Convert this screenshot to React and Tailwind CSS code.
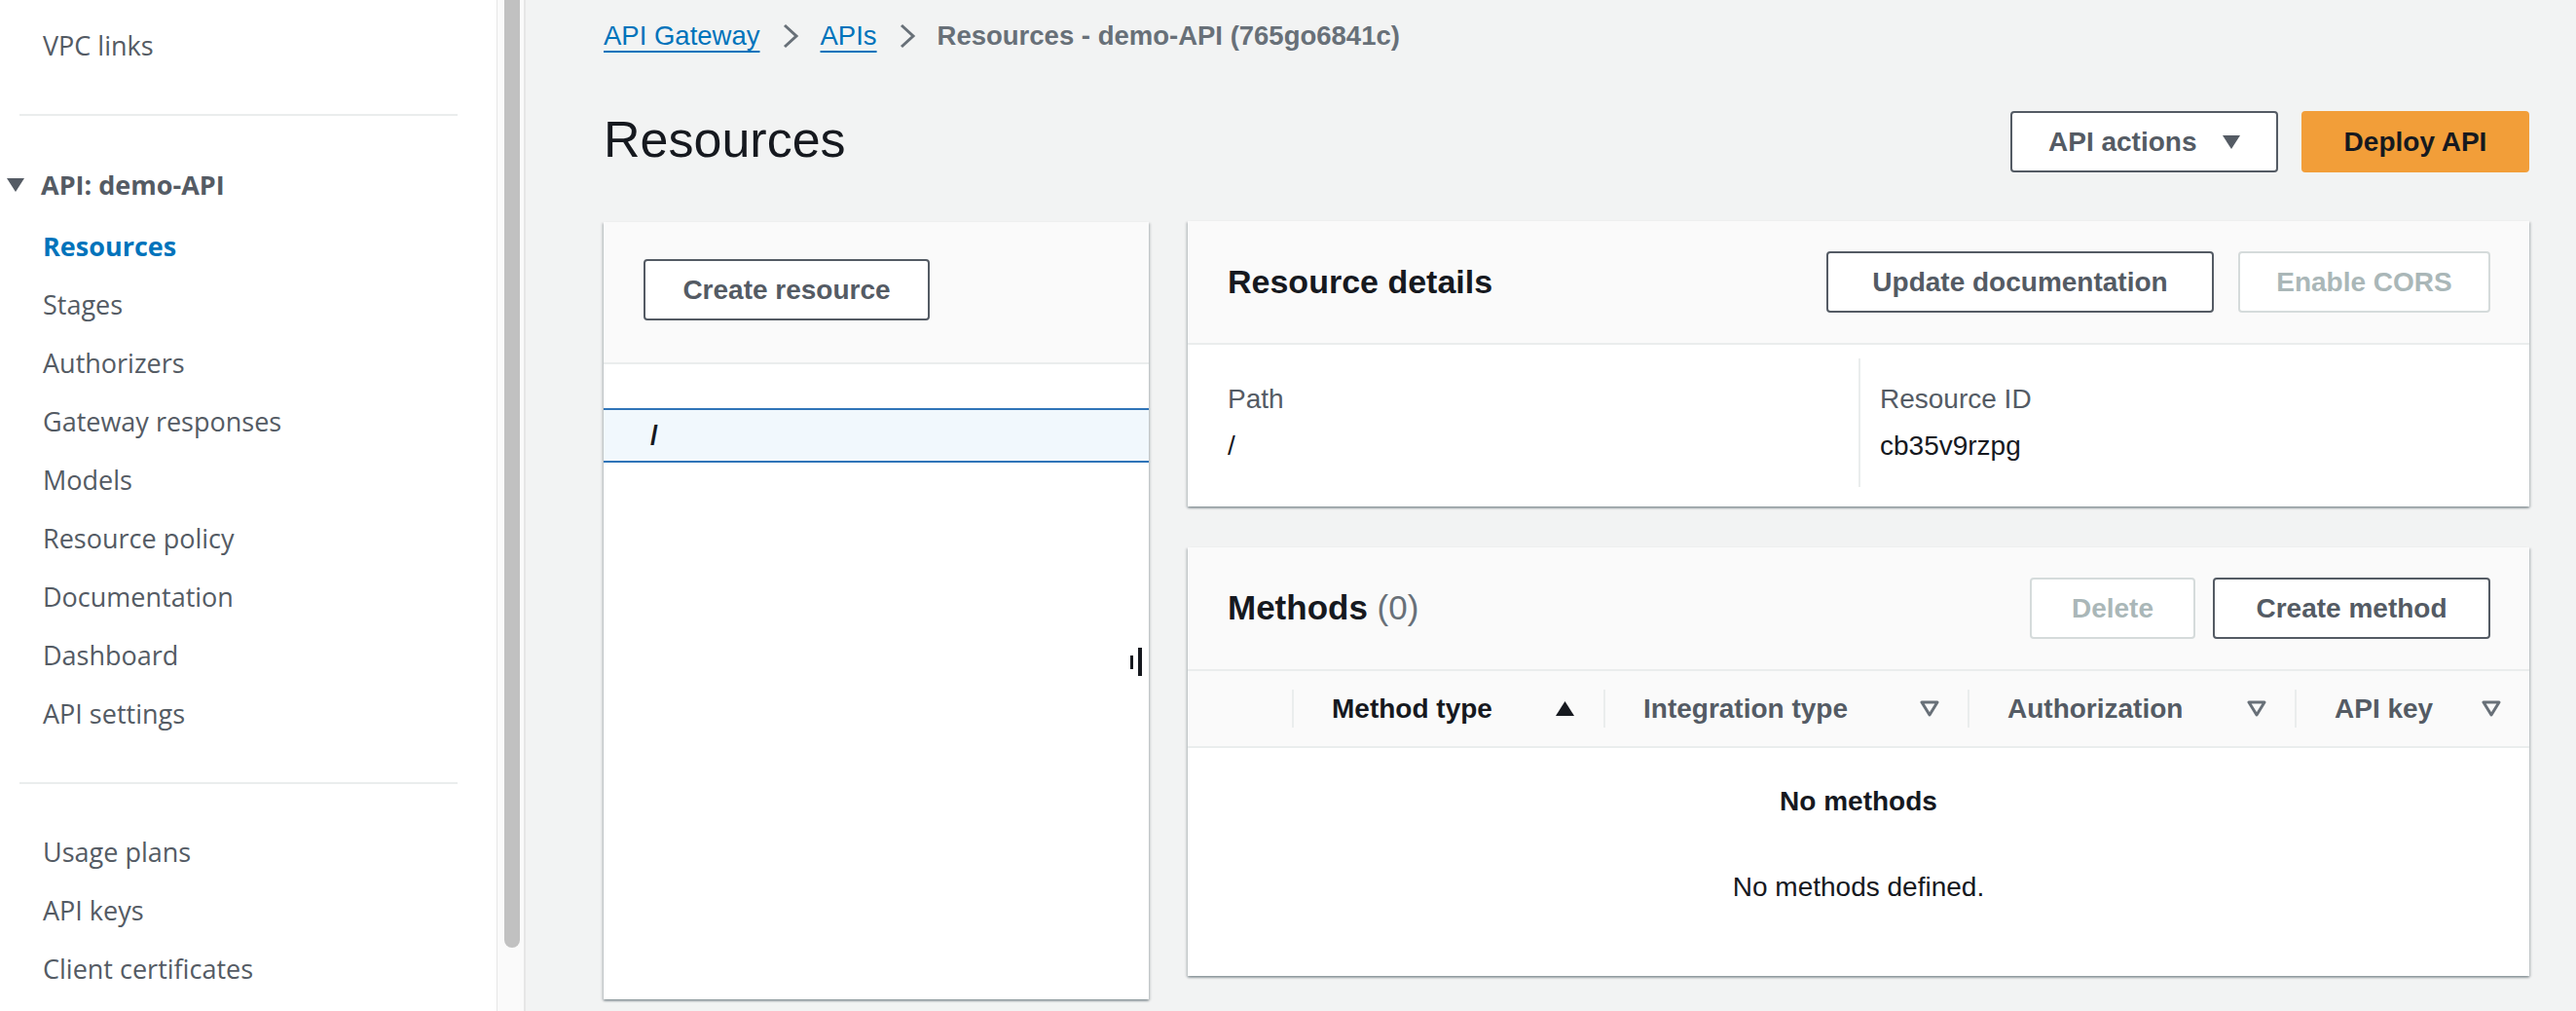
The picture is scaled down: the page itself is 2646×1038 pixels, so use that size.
import React from "react";

const apiNav = [
  "Resources",
  "Stages",
  "Authorizers",
  "Gateway responses",
  "Models",
  "Resource policy",
  "Documentation",
  "Dashboard",
  "API settings",
];

function Chevron() {
  return (
    <svg width="18" height="28" viewBox="0 0 18 28" className="shrink-0">
      <polyline points="3,3 15,14 3,25" fill="none" stroke="#687078" strokeWidth="3" />
    </svg>
  );
}

function SortUp() {
  return (
    <svg width="21" height="17" viewBox="0 0 21 17">
      <polygon points="10.5,1 20,16 1,16" fill="#16191f" />
    </svg>
  );
}

function SortDown() {
  return (
    <svg width="20" height="17" viewBox="0 0 20 17">
      <polygon points="2,2 18,2 10,15" fill="none" stroke="#687078" strokeWidth="3" strokeLinejoin="round" />
    </svg>
  );
}

function Button({ children, disabled, w }) {
  return (
    <button
      className={
        disabled
          ? `${w} h-[63px] flex items-center justify-center whitespace-nowrap border-2 border-[#d5dbdb] rounded-[4px] bg-white text-[#aab7b8] font-bold text-[28px] leading-none`
          : `${w} h-[63px] flex items-center justify-center whitespace-nowrap border-2 border-[#545b64] rounded-[4px] bg-white text-[#545b64] font-bold text-[28px] leading-none`
      }
    >
      {children}
    </button>
  );
}

const card =
  "bg-white shadow-[0_2px_2px_0_rgba(0,28,36,0.3),2px_1px_2px_0_rgba(0,28,36,0.12),-2px_1px_2px_0_rgba(0,28,36,0.12)]";

export default function App() {
  return (
    <div className="flex h-[1038px] w-full overflow-hidden bg-[#f2f3f3] font-['Liberation_Sans',Arial,sans-serif]">
      {/* ---------- Sidebar ---------- */}
      <aside className="w-[510px] shrink-0 bg-white pt-[17px] font-['Open_Sans',sans-serif] text-[27px] text-[#545b64]">
        <div className="h-[60px] flex items-center pl-[44px]">VPC links</div>
        <div className="mt-[40px] ml-[20px] w-[450px] h-[2px] bg-[#eaeded]" />
        <div className="mt-[41px] h-[60px] flex items-center pl-[6px] font-bold">
          <svg width="20" height="16" viewBox="0 0 20 16" className="mr-[16px]">
            <polygon points="1,1 19,1 10,15" fill="#545b64" />
          </svg>
          API: demo-API
        </div>
        <div className="mt-[3px]">
          {apiNav.map((item) => (
            <div
              key={item}
              className={
                item === "Resources"
                  ? "h-[60px] flex items-center pl-[44px] font-bold text-[#0073bb]"
                  : "h-[60px] flex items-center pl-[44px]"
              }
            >
              {item}
            </div>
          ))}
        </div>
        <div className="mt-[40px] ml-[20px] w-[450px] h-[2px] bg-[#eaeded]" />
        <div className="mt-[40px]">
          {["Usage plans", "API keys", "Client certificates"].map((item) => (
            <div key={item} className="h-[60px] flex items-center pl-[44px]">
              {item}
            </div>
          ))}
        </div>
      </aside>

      {/* scrollbar */}
      <div className="w-[30px] shrink-0 bg-[#fafafa] border-l border-r-2 border-[#e6e6e6] pl-[7px]">
        <div className="w-[16px] h-[973px] rounded-b-full bg-[#c1c1c1]" />
      </div>

      {/* ---------- Main ---------- */}
      <main className="flex-1 min-w-0 pl-[80px] pr-[48px] pt-[18px]">
        <nav className="h-[38px] flex items-center gap-[22px] text-[27.5px] whitespace-nowrap">
          <a className="text-[#0073bb] underline decoration-2 underline-offset-[6px]">API Gateway</a>
          <Chevron />
          <a className="text-[#0073bb] underline decoration-2 underline-offset-[6px]">APIs</a>
          <Chevron />
          <span className="font-bold text-[#687078]">Resources - demo-API (765go6841c)</span>
        </nav>

        <div className="mt-[58px] h-[63px] flex items-center justify-between">
          <h1 className="text-[52px] leading-none text-[#16191f] mb-[6px]">Resources</h1>
          <div className="flex gap-[24px]">
            <button className="w-[275px] h-[63px] pl-[37px] pr-[36px] whitespace-nowrap border-2 border-[#545b64] rounded-[4px] bg-white text-[#545b64] font-bold text-[28px] flex items-center justify-between">
              API actions
              <svg width="20" height="16" viewBox="0 0 20 16">
                <polygon points="1,1 19,1 10,15" fill="#545b64" />
              </svg>
            </button>
            <button className="w-[234px] h-[63px] whitespace-nowrap rounded-[4px] bg-[#f29e39] text-[#16191f] font-bold text-[28px]">
              Deploy API
            </button>
          </div>
        </div>

        <div className="mt-[50px] flex gap-[40px] items-start">
          {/* ---------- Resource tree ---------- */}
          <section className={`${card} relative w-[560px] h-[798px] shrink-0 mt-[1px]`}>
            <div className="h-[146px] bg-[#fafafa] border-b-2 border-[#eaeded] pl-[41px] pt-[38px]">
              <Button w="w-[294px]">Create resource</Button>
            </div>
            <div className="mt-[45px] h-[56px] border-y-2 border-[#2f74b8] bg-[#f1f8fd] flex items-center pl-[48px] text-[28px] font-bold text-[#16191f]">
              /
            </div>
            <div className="absolute right-[7px] top-[437px] flex items-center gap-[5px]">
              <div className="w-[3px] h-[14px] bg-[#16191f]" />
              <div className="w-[4px] h-[29px] bg-[#16191f]" />
            </div>
          </section>

          {/* ---------- Right column ---------- */}
          <div className="flex-1 min-w-0 flex flex-col gap-[42px]">
            <section className={card}>
              <div className="h-[127px] bg-[#fafafa] border-b-2 border-[#eaeded] pl-[41px] pr-[40px] flex items-center justify-between">
                <h2 className="text-[34px] font-bold text-[#16191f]">Resource details</h2>
                <div className="flex gap-[25px]">
                  <Button w="w-[398px]">Update documentation</Button>
                  <Button w="w-[259px]" disabled>
                    Enable CORS
                  </Button>
                </div>
              </div>
              <div className="grid grid-cols-2 pt-[14px] pb-[20px] text-[28px] leading-[36px]">
                <div className="h-[132px] pl-[41px] pt-[24px]">
                  <div className="text-[#545b64]">Path</div>
                  <div className="mt-[12px] text-[#16191f]">/</div>
                </div>
                <div className="h-[132px] border-l-2 border-[#eaeded] pl-[20px] pt-[24px]">
                  <div className="text-[#545b64]">Resource ID</div>
                  <div className="mt-[12px] text-[#16191f]">cb35v9rzpg</div>
                </div>
              </div>
            </section>

            <section className={card}>
              <div className="h-[127px] bg-[#fafafa] border-b-2 border-[#eaeded] pl-[41px] pr-[40px] flex items-center justify-between">
                <h2 className="text-[35px] font-bold text-[#16191f]">
                  Methods <span className="font-normal text-[#687078]">(0)</span>
                </h2>
                <div className="flex gap-[18px]">
                  <Button w="w-[170px]" disabled>
                    Delete
                  </Button>
                  <Button w="w-[285px]">Create method</Button>
                </div>
              </div>
              <div className="h-[79px] bg-[#fafafa] border-b-2 border-[#eaeded] flex text-[28px] font-bold">
                <div className="w-[107px]" />
                {[
                  { t: "Method type", w: "w-[320px]", up: true },
                  { t: "Integration type", w: "w-[374px]" },
                  { t: "Authorization", w: "w-[336px]" },
                  { t: "API key", w: "flex-1" },
                ].map((c) => (
                  <div key={c.t} className={`${c.w} flex items-center pr-[29px]`}>
                    <div className="w-[2px] h-[39px] bg-[#eaeded]" />
                    <span className={c.up ? "ml-[39px] flex-1 text-[#16191f]" : "ml-[39px] flex-1 text-[#545b64]"}>
                      {c.t}
                    </span>
                    {c.up ? <SortUp /> : <SortDown />}
                  </div>
                ))}
              </div>
              <div className="h-[234px] text-center text-[28px] leading-[36px] text-[#16191f] pt-[37px]">
                <div className="font-bold">No methods</div>
                <div className="mt-[52px]">No methods defined.</div>
              </div>
            </section>
          </div>
        </div>
      </main>
    </div>
  );
}
